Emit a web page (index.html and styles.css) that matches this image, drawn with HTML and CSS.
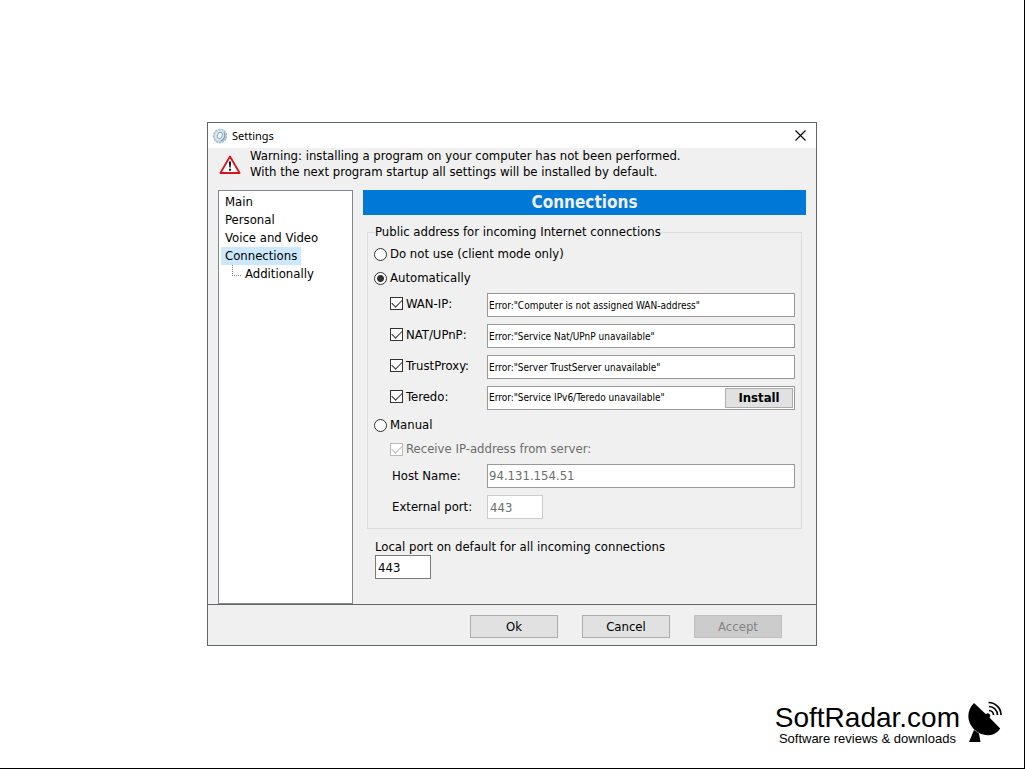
FILE: index.html
```html
<!doctype html>
<html lang="en">
<head>
<meta charset="utf-8">
<meta name="viewport" content="width=device-width, initial-scale=1.0">
<link rel="stylesheet" href="styles.css">
<title>Settings</title>
</head>
<body>
<form class="dialog">
  <header class="titlebar">
    <svg class="gear" width="16" height="16" viewBox="0 0 16 16">
      <ellipse cx="8" cy="8" rx="6.400" ry="6.800" transform="rotate(25 8 8)" fill="#c3d5e5" stroke="#a9bccd" stroke-width="1.400" stroke-dasharray="2.200 1"/>
      <ellipse cx="7.400" cy="7.600" rx="5" ry="5.800" transform="rotate(25 8 8)" fill="#dce9f4" stroke="#bdd0e1"/>
      <path d="M12 4.500c1.800 3 .5 6.800-3 8.500" fill="none" stroke="#7f9db8" stroke-width="1.200"/>
      <ellipse cx="7.600" cy="7.600" rx="2.300" ry="3.200" transform="rotate(25 8 8)" fill="#fff" stroke="#8ba9c4"/>
    </svg>
    <h1>Settings</h1>
    <button type="button" class="close" aria-label="Close">
      <svg width="11" height="11" viewBox="0 0 11 11"><path d="M.5.5l10 10M10.5.5l-10 10" stroke="#000" stroke-width="1.1"/></svg>
    </button>
  </header>

  <div class="warning">
    <svg width="22" height="20" viewBox="0 0 22 20">
      <path d="M11 2.500L20.600 19H1.400z" fill="#fff" stroke="#d8131b" stroke-width="1.800" stroke-linejoin="round"/>
      <path d="M9.900 7.500h2.200l-.4 6h-1.400zM10 14.700h2v2h-2z" fill="#111"/>
    </svg>
    <p>Warning: installing a program on your computer has not been performed.<br>With the next program startup all settings will be installed by default.</p>
  </div>

  <div class="content">
    <nav class="tree">
      <ul>
        <li><a href="#">Main</a></li>
        <li><a href="#">Personal</a></li>
        <li><a href="#">Voice and Video</a></li>
        <li><a href="#" class="selected">Connections</a>
          <ul class="sub">
            <li><a href="#">Additionally</a></li>
          </ul>
        </li>
      </ul>
    </nav>

    <main class="page">
      <h2>Connections</h2>
      <fieldset>
        <legend>Public address for incoming Internet connections</legend>
        <label class="option"><input type="radio" name="mode">Do not use (client mode only)</label>
        <label class="option"><input type="radio" name="mode" checked>Automatically</label>
        <div class="rows">
          <label class="check"><input type="checkbox" checked>WAN-IP:</label>
          <input class="field status" type="text" aria-label="WAN-IP status" value='Error:"Computer is not assigned WAN-address"' readonly>
          <label class="check"><input type="checkbox" checked>NAT/UPnP:</label>
          <input class="field status" type="text" aria-label="NAT/UPnP status" value='Error:"Service Nat/UPnP unavailable"' readonly>
          <label class="check"><input type="checkbox" checked>TrustProxy:</label>
          <input class="field status" type="text" aria-label="TrustProxy status" value='Error:"Server TrustServer unavailable"' readonly>
          <label class="check"><input type="checkbox" checked>Teredo:</label>
          <div class="field with-button">
            <input class="status" type="text" aria-label="Teredo status" value='Error:"Service IPv6/Teredo unavailable"' readonly>
            <button type="button" class="install">Install</button>
          </div>
        </div>
        <label class="option"><input type="radio" name="mode">Manual</label>
        <label class="option nested disabled"><input type="checkbox" checked disabled>Receive IP-address from server:</label>
        <div class="rows">
          <label class="name" for="host">Host Name:</label>
          <input class="field gray" type="text" id="host" value="94.131.154.51" readonly>
          <label class="name" for="external">External port:</label>
          <input class="field port" type="text" id="external" value="443" disabled>
        </div>
      </fieldset>
      <div class="local">
        <label for="local">Local port on default for all incoming connections</label>
        <input class="field port" type="text" id="local" value="443">
      </div>
    </main>
  </div>

  <footer class="buttons">
    <button type="button">Ok</button>
    <button type="button">Cancel</button>
    <button type="button" disabled>Accept</button>
  </footer>
</form>

<div class="brand">
  <div class="brand-title">
    <p class="brand-name">SoftRadar.com</p>
    <p class="brand-text">Software reviews &amp; downloads</p>
  </div>
  <svg width="34" height="42" viewBox="0 0 34 42">
    <path d="M6 2C-.5 8.500-1 17 2.500 23.500C6.500 31 14 34.500 21 34.200C25.500 34 29.500 31.500 32.200 27.500L21.500 16.500A2.200 2.200 0 1 0 18 13.200z"/>
    <path d="M6 29L11 32.500L12.500 41H1z"/>
    <path d="M21 9.500a4.500 4.500 0 0 1 4.500 4.500M21 5.500a8.500 8.500 0 0 1 8.500 8.500M20.500 1.500a12.500 12.500 0 0 1 12.500 12.500" fill="none" stroke="#000" stroke-width="1.700"/>
  </svg>
</div>
</body>
</html>
```
FILE: styles.css
```css
* {
    box-sizing: border-box;
}
body {
    display: grid;
    grid-template-rows: 1fr auto 1fr;
    min-height: 100vh;
    margin: 0;
    border: solid #000;
    border-width: 0 1px 1px 0;
    background: #fff;
    color: #000;
    font: 13px/16px "DejaVu Sans Condensed", Tahoma, sans-serif;
}
h1, h2, p, ul {
    margin: 0;
    padding: 0;
}
ul {
    list-style: none;
}
input, button {
    margin: 0;
    font: inherit;
    color: inherit;
}

/* dialog */
.dialog {
    grid-row: 2;
    justify-self: center;
    width: 610px;
    max-width: 100%;
    border: 1px solid #5f656b;
    background: #f0f0f0;
}
.titlebar {
    display: flex;
    align-items: center;
    gap: 4px;
    height: 25px;
    padding: 0 10px 0 4px;
    background: #fff;
}
.titlebar h1 {
    flex: 1;
    font: 11px/16px "Noto Sans", "Open Sans", sans-serif;
}
.close {
    display: flex;
    padding: 0;
    border: 0;
    background: none;
}
.warning {
    display: flex;
    align-items: center;
    gap: 9px;
    padding: 0 11px;
}
.content {
    display: flex;
    gap: 10px;
    padding: 10px 10px 0;
}

/* tree */
.tree {
    width: 135px;
    padding: 2px;
    border: 1px solid #828790;
    background: #fff;
}
.tree li {
    line-height: 18px;
}
.tree a {
    display: inline-block;
    padding: 0 4px;
    color: inherit;
    text-decoration: none;
    vertical-align: top;
}
.tree .selected {
    background: #cce8ff;
}
.sub li {
    display: flex;
    padding-left: 11px;
}
.sub li:before {
    content: "";
    width: 8px;
    height: 10px;
    border: dotted #808080;
    border-width: 0 0 1px 1px;
}

/* page */
.page {
    flex: 1;
    padding-bottom: 25px;
}
.page h2 {
    background: #0078d7;
    color: #f0f0f0;
    font-size: 17px;
    line-height: 25px;
    text-align: center;
}
fieldset {
    margin: 9px 4px 0;
    padding: 2px 6px 9px;
    border: 1px solid #dcdcdc;
}
legend {
    margin-left: 1px;
    padding: 0;
}
.option {
    display: flex;
    align-items: center;
    gap: 3px;
    height: 24px;
}
.nested {
    padding-left: 16px;
}
.disabled {
    color: #6d6d6d;
}
.rows {
    display: grid;
    grid-template-columns: 97px 1fr;
    gap: 7px 0;
    margin: 3px 0;
    padding-left: 16px;
}
fieldset .rows:last-child {
    margin-bottom: 0;
}
.check {
    display: flex;
    align-items: center;
    gap: 3px;
    height: 21px;
}
.name {
    padding-left: 2px;
    line-height: 24px;
}
.field {
    height: 24px;
    padding: 0 1px;
    border: 1px solid #999;
    background: #fff;
}
.status {
    font-size: 10px;
}
.gray {
    padding-bottom: 2px;
    color: #6d6d6d;
}
.with-button {
    display: flex;
    align-items: center;
}
.with-button input {
    flex: 1;
    min-width: 0;
    padding: 0;
    border: 0;
}
.install {
    width: 68px;
    height: 20px;
    padding: 0;
    border: 1px solid #adadad;
    background: #e1e1e1;
    font-weight: bold;
}
.port {
    width: 56px;
    padding: 0 2px;
    border-color: #7a7a7a;
}
.port:disabled {
    border-color: #ccc;
    color: #6d6d6d;
}
.local {
    display: flex;
    flex-direction: column;
    align-items: flex-start;
    padding: 10px 12px 0;
}

/* tick boxes and radios */
input[type=radio],
input[type=checkbox] {
    flex: none;
    appearance: none;
    width: 13px;
    height: 13px;
    border: 1px solid #333;
    background: #fff;
}
input[type=radio] {
    border-radius: 50%;
}
input[type=radio]:checked {
    background: radial-gradient(circle, #333 3px, #fff 4px);
}
input[type=checkbox]:checked {
    display: grid;
    place-items: center;
}
input[type=checkbox]:checked:before {
    content: "";
    width: 9px;
    height: 5px;
    margin-bottom: 3px;
    border: solid #333;
    border-width: 0 0 1px 1px;
    transform: rotate(-45deg);
}
input[type=checkbox]:disabled,
input[type=checkbox]:disabled:before {
    border-color: #bbb;
}

/* bottom buttons */
.buttons {
    display: flex;
    justify-content: flex-end;
    gap: 24px;
    padding: 10px 34px 7px;
    border-top: 1px solid #646464;
}
.buttons button {
    width: 88px;
    height: 23px;
    padding: 0;
    border: 1px solid #adadad;
    background: #e1e1e1;
}
.buttons button:disabled {
    border-color: #bfbfbf;
    background: #ccc;
    color: #838383;
}

/* logo */
.brand {
    grid-row: 3;
    justify-self: end;
    align-self: end;
    display: flex;
    align-items: flex-start;
    gap: 8px;
    padding: 0 22px 22px 0;
    font-family: "Liberation Sans", Arial, sans-serif;
    text-align: center;
}
.brand-title {
    padding-top: 3px;
}
.brand-name {
    font-size: 28px;
    line-height: 28px;
}
.brand-text {
    font-size: 13px;
    line-height: 14px;
}
```
